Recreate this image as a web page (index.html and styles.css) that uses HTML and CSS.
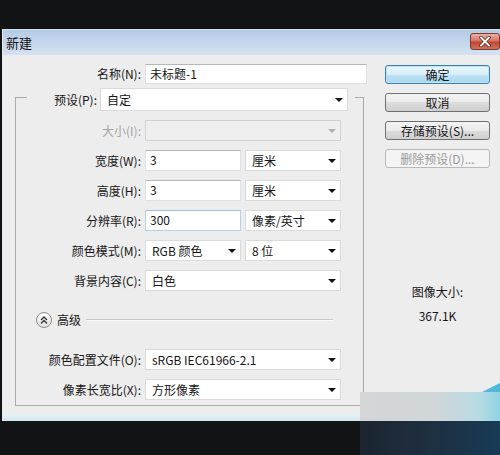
FILE: index.html
```html
<!DOCTYPE html>
<html lang="zh-CN">
<head>
<meta charset="utf-8">
<title>新建</title>
<link rel="stylesheet" href="styles.css">
</head>
<body>
<div class="screen">
  <div class="dialog">
    <div class="titlebar">
      <span class="title">新建</span>
      <div class="close">
        <svg width="14" height="11" viewBox="0 0 14 11"><path d="M3 1.5 L11 9.5 M11 1.5 L3 9.5" stroke="#5a1f1a" stroke-width="3.4" stroke-linecap="round"/><path d="M3 1.5 L11 9.5 M11 1.5 L3 9.5" stroke="#ffffff" stroke-width="1.9" stroke-linecap="round"/></svg>
      </div>
    </div>
    <div class="content">
      <div class="left">
        <div class="name-row">
          <span class="lbl">名称(N):</span>
          <div class="field name-field">未标题-1</div>
        </div>
        <fieldset class="group">
          <legend class="legend">
            <span class="legend-inner">
              <span class="preset-lbl">预设(P):</span>
              <span class="select preset">自定<i class="arrow"></i></span>
            </span>
          </legend>
          <div class="rows">
            <div class="row">
              <span class="lbl disabled">大小(I):</span>
              <div class="select disabled-select"><i class="arrow gray"></i></div>
            </div>
            <div class="row">
              <span class="lbl">宽度(W):</span>
              <div class="pair"><div class="field">3</div><div class="select">厘米<i class="arrow"></i></div></div>
            </div>
            <div class="row">
              <span class="lbl">高度(H):</span>
              <div class="pair"><div class="field">3</div><div class="select">厘米<i class="arrow"></i></div></div>
            </div>
            <div class="row">
              <span class="lbl">分辨率(R):</span>
              <div class="pair"><div class="field focused">300</div><div class="select">像素/英寸<i class="arrow"></i></div></div>
            </div>
            <div class="row">
              <span class="lbl">颜色模式(M):</span>
              <div class="pair"><div class="select">RGB 颜色<i class="arrow"></i></div><div class="select">8 位<i class="arrow"></i></div></div>
            </div>
            <div class="row">
              <span class="lbl">背景内容(C):</span>
              <div class="select">白色<i class="arrow"></i></div>
            </div>
            <div class="adv">
              <span class="adv-btn"><svg width="16" height="16" viewBox="0 0 16 16"><polyline points="5,8 8,5 11,8" fill="none" stroke="#333" stroke-width="1.4"/><polyline points="5,11.5 8,8.5 11,11.5" fill="none" stroke="#333" stroke-width="1.4"/></svg></span>
              <span class="adv-text">高级</span>
              <span class="adv-line"></span>
            </div>
            <div class="row">
              <span class="lbl">颜色配置文件(O):</span>
              <div class="select">sRGB IEC61966-2.1<i class="arrow"></i></div>
            </div>
            <div class="row">
              <span class="lbl">像素长宽比(X):</span>
              <div class="select">方形像素<i class="arrow"></i></div>
            </div>
          </div>
        </fieldset>
      </div>
      <div class="right">
        <div class="btn default">确定</div>
        <div class="btn">取消</div>
        <div class="btn">存储预设(S)...</div>
        <div class="btn disabled-btn">删除预设(D)...</div>
        <div class="info">
          <div>图像大小:</div>
          <div>367.1K</div>
        </div>
      </div>
    </div>
    <div class="frame-bottom"></div>
  </div>
  <div class="wm">
    <div class="wm-top"></div>
    <div class="wm-bottom"></div>
    <i class="wm-tri"></i>
  </div>
</div>
</body>
</html>
```

FILE: styles.css
```css
html, body {
  margin: 0;
  background: #111314;
}
body {
  font-family: "Noto Sans CJK SC", "Microsoft YaHei", sans-serif;
  font-size: 12px;
  color: #151515;
}
.screen {
  position: relative;
  width: 500px;
  height: 455px;
  overflow: hidden;
  padding-top: 29px;
  box-sizing: border-box;
}
.dialog {
  margin-left: 2px;
  width: 498px;
  border-top: 1px solid #d4e3ea;
  border-left: 1px solid #e2eaf0;
  box-sizing: border-box;
  background: #ededed;
}
.titlebar {
  height: 25px;
  display: flex;
  align-items: flex-start;
  background: linear-gradient(#b4cbe5, #d5e2f0);
}
.title {
  font-size: 13px;
  line-height: 13px;
  margin: 6px 0 0 3px;
  color: #111;
}
.close {
  margin: 3px 0 0 auto;
  width: 30px;
  height: 17px;
  box-sizing: border-box;
  border: 1px solid #7b3a33;
  border-radius: 3px;
  background: linear-gradient(#eab0a6, #d57564 45%, #c2462f 55%, #d0735f);
  display: flex;
  align-items: center;
  justify-content: center;
}
.content {
  display: flex;
  padding: 9px 0 8px 12px;
}
.left {
  width: 352px;
}
.name-row {
  display: flex;
  height: 20px;
  gap: 4px;
}
.lbl {
  width: 126px;
  text-align: right;
  white-space: nowrap;
  line-height: 21px;
}
.name-row .lbl {
  line-height: 20px;
}
.lbl.disabled {
  color: #a4a4a4;
}
.field {
  height: 100%;
  box-sizing: border-box;
  border: 1px solid #dde1e6;
  border-top-color: #b4b6bb;
  background: #fff;
  padding-left: 4px;
  line-height: 18px;
  flex: 1;
}
.name-field {
  flex: 0 0 222px;
}
.field.focused {
  border-color: #b5d3e6;
  border-top-color: #9ec0da;
}
.group {
  margin: 0;
  padding: 9px 0 5px 0;
  border: 1px solid #ababab;
  width: 349px;
  box-sizing: border-box;
  min-width: 0;
}
.legend {
  margin-left: 11px;
  padding: 4px 7px 0 0;
}
.legend-inner {
  display: flex;
  align-items: center;
  gap: 3px;
  height: 23px;
}
.preset-lbl {
  width: 70px;
  text-align: right;
  line-height: 23px;
}
.select {
  display: flex;
  align-items: center;
  height: 100%;
  box-sizing: border-box;
  border: 1px solid #dadada;
  background: #fff;
  padding: 0 4px 0 6px;
  white-space: nowrap;
  flex: 1;
}
.preset {
  width: 248px;
  flex: none;
}
.disabled-select {
  background: #efefef;
  border-color: #d2d2d2;
}
.arrow {
  margin-left: auto;
  width: 0;
  height: 0;
  border-left: 4px solid transparent;
  border-right: 4px solid transparent;
  border-top: 4px solid #111;
}
.arrow.gray {
  border-top-color: #b0b0b0;
}
.rows {
  display: flex;
  flex-direction: column;
  gap: 9px;
}
.row {
  display: grid;
  grid-template-columns: 125px 196px;
  column-gap: 4px;
  height: 21px;
}
.row .lbl {
  width: auto;
}
.pair {
  display: flex;
  gap: 4px;
}
.pair > * {
  width: 96px;
  flex: none;
}
.adv {
  display: flex;
  align-items: center;
  height: 22px;
  margin: 9px 0;
  padding-left: 20px;
}
.adv-btn {
  width: 16px;
  height: 16px;
  box-sizing: border-box;
  border: 1px solid #8d8d8d;
  border-radius: 50%;
  background: linear-gradient(#ffffff, #e2e2e2);
  display: flex;
  align-items: center;
  justify-content: center;
}
.adv-btn svg {
  flex: none;
}
.adv-text {
  margin-left: 5px;
  line-height: 22px;
}
.adv-line {
  margin-left: 5px;
  width: 247px;
  height: 0;
  border-top: 1px solid #c6c6c6;
  border-bottom: 1px solid #fbfbfb;
}
.right {
  width: 105px;
  margin-left: 18px;
  padding-top: 1px;
  display: flex;
  flex-direction: column;
}
.btn {
  height: 19px;
  box-sizing: border-box;
  margin-bottom: 9px;
  text-align: center;
  line-height: 17px;
  border: 1px solid #707070;
  border-radius: 3px;
  background: linear-gradient(#f3f3f3, #ebebeb 50%, #dddddd 50%, #cfcfcf);
  white-space: nowrap;
}
.btn.default {
  border-color: #3d7eae;
  background: linear-gradient(#eaf6fc, #d8eff9 50%, #bfe3f4 50%, #a9d7ef);
  box-shadow: inset 0 0 0 1px #b9e6f8;
}
.btn.disabled-btn {
  border-color: #b6babd;
  background: #f4f4f4;
  color: #9a9a9a;
}
.info {
  margin-top: 103px;
  text-align: center;
  line-height: 24px;
}
.frame-bottom {
  height: 7px;
  background: linear-gradient(#e4f2f6, #d2e8ef);
}
.wm {
  position: absolute;
  left: 360px;
  top: 392px;
  width: 140px;
  height: 63px;
}
.wm-top {
  height: 29px;
  background: linear-gradient(90deg, #d4d6d7, #d0d6d9 55%, #b8dbe3 85%, #8fd3e2);
}
.wm-bottom {
  height: 34px;
  background: linear-gradient(90deg, #1c2530, #1e3042 55%, #173a55);
}
.wm-tri {
  position: absolute;
  right: 0;
  top: -9px;
  width: 0;
  height: 0;
  border-left: 18px solid transparent;
  border-bottom: 9px solid #52b8d8;
}
```
